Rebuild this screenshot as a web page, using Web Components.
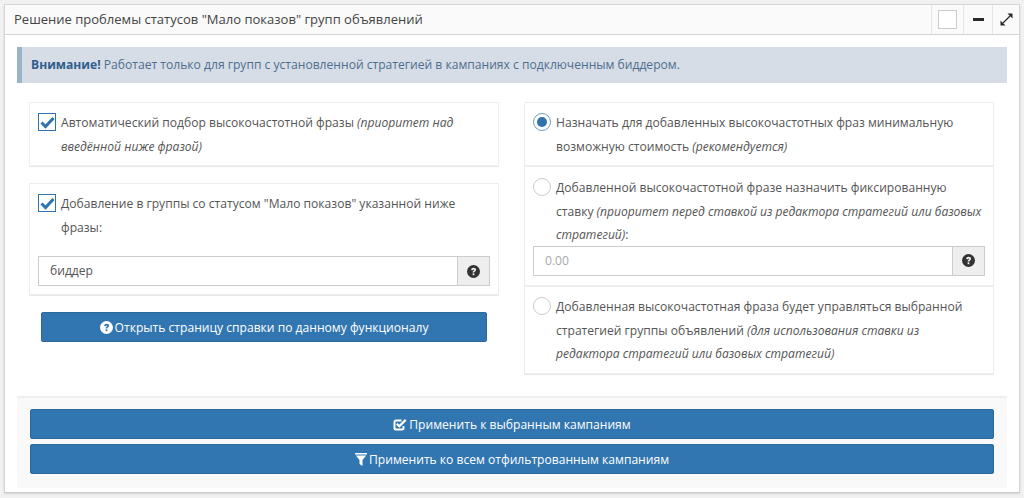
<!DOCTYPE html>
<html lang="ru"><head><meta charset="utf-8"><title>Мало показов</title>
<style>
html,body{margin:0;padding:0;background:#f1f1f1;height:498px;overflow:hidden}
body{font:12.1px/24px "Open Sans",sans-serif;color:#555;padding:4px 3px 0 4px;box-sizing:border-box}
</style></head><body>
<template id="i-q"><svg width="13" height="13" viewBox="0 0 24 24"><circle cx="12" cy="12" r="12" fill="currentColor"/><path d="M7.600 9.300c.2-2.600 2-4.100 4.600-4.100 2.700 0 4.500 1.500 4.500 3.700 0 1.600-.9 2.500-2 3.200-.9.600-1.100 1-1.100 1.900h-3.200c0-1.900.6-2.800 1.800-3.600.8-.5 1.100-.8 1.100-1.300 0-.5-.4-.9-1.100-.9-.8 0-1.200.5-1.300 1.300z" fill="var(--q,#fff)"/><rect x="10.400" y="15.400" width="3.200" height="3.400" fill="var(--q,#fff)"/></svg></template>
<ws-widget title-text='Решение проблемы статусов "Мало показов" групп объявлений'>
  <ws-alert><b>Внимание!</b> Работает только для групп с установленной стратегией в кампаниях с подключенным биддером.</ws-alert>
  <ws-columns>
    <div slot="left">
      <ws-card><ws-option type="check" checked>Автоматический подбор высокочастотной фразы <i>(приоритет над введённой ниже фразой)</i></ws-option></ws-card>
      <ws-card style="margin-top:17px;padding-bottom:8px"><ws-option type="check" checked>Добавление в группы со статусом "Мало показов" указанной ниже фразы:</ws-option><ws-input value="биддер" style="margin-top:17px"></ws-input></ws-card>
      <ws-button style="margin:17px 12px 0 12px" icon="q">Открыть страницу справки по данному функционалу</ws-button>
    </div>
    <div slot="right">
      <ws-card><ws-option type="radio" checked>Назначать для добавленных высокочастотных фраз минимальную возможную стоимость <i>(рекомендуется)</i></ws-option></ws-card>
      <ws-card style="padding-top:9px;padding-bottom:9px"><ws-option type="radio">Добавленной высокочастотной фразе назначить фиксированную ставку <i>(приоритет перед ставкой из редактора стратегий или базовых стратегий)</i>:</ws-option><ws-input placeholder="0.00" style="margin-top:-1px"></ws-input></ws-card>
      <ws-card><ws-option type="radio">Добавленная высокочастотная фраза будет управляться выбранной стратегией группы объявлений <i>(для использования ставки из редактора стратегий или базовых стратегий)</i></ws-option></ws-card>
    </div>
  </ws-columns>
  <ws-footer>
    <ws-button icon="check">Применить к выбранным кампаниям</ws-button>
    <ws-button icon="filter" style="margin-top:5px">Применить ко всем отфильтрованным кампаниям</ws-button>
  </ws-footer>
</ws-widget>
<script>
const def=(n,html,init)=>customElements.define(n,class extends HTMLElement{constructor(){super();this.attachShadow({mode:'open'}).innerHTML=typeof html==='function'?html(this):html}connectedCallback(){const r=this.shadowRoot;if(init&&!r.__i){r.__i=1;init(this,r)}}});
def('ws-widget',`<style>
:host{display:block;width:1016px;height:489px;box-sizing:border-box;background:#fff;border:1px solid #d6d6d6;border-bottom-color:#c8c8c8;box-shadow:0 1px 2px rgba(0,0,0,.12)}
header{display:flex;height:30px;box-sizing:border-box;background:#fafafa;border-bottom:1px solid #d4d4d4}
h2{flex:1;margin:0;padding-left:9px;font:400 13.03px/29px "Open Sans",sans-serif;color:#444}
.t{box-sizing:border-box;border-left:1px solid #e6e6e6;display:flex;align-items:center;justify-content:center;color:#222}
.t.a{width:32px}.t.m{width:29px}.t.e{width:27px}
.box{width:17px;height:17px;border:1px solid #ccc;background:#fff}
.body{padding:12px 12px 0 12px}
</style><header><h2 id="t"></h2><div class="t a"><div class="box"></div></div><div class="t m"><svg width="11" height="4"><rect width="11" height="3" fill="#2a2a2a"/></svg></div><div class="t e"><svg width="13" height="13" viewBox="0 0 13 13"><path d="M7.500 .5h5v5zM.5 7.500v5h5z" fill="#2a2a2a"/><path d="M3 10L10 3" stroke="#2a2a2a" stroke-width="1.300"/></svg></div></header><div class="body"><slot></slot></div>`,(el,r)=>{r.getElementById('t').textContent=el.getAttribute('title-text')});
def('ws-alert',`<style>:host{display:block;height:36px;box-sizing:border-box;background:#d6dde7;border-left:5px solid #9cb4c8;padding-left:9px;font-size:12.1px;line-height:36px;color:#4f6d8e}::slotted(b){color:#305d8c;font-weight:700}</style><slot></slot>`);
def('ws-columns',`<style>:host{display:flex;margin-top:19px;height:294px;padding-left:12px}.l{width:470px}.r{width:470px;margin-left:25px}</style><div class="l"><slot name="left"></slot></div><div class="r"><slot name="right"></slot></div>`);
def('ws-card',`<style>:host{display:block;background:#fff;border:1px solid #ededed;box-shadow:0 1px 1px rgba(0,0,0,.1);padding:8px 8px 7px 8px;border-radius:1px}</style><slot></slot>`);
def('ws-option',e=>{const c=e.getAttribute('type')==='check',on=e.hasAttribute('checked');
const mark=c?`<div class="b"><svg width="15" height="13" viewBox="0 0 15 13"><path d="M1.500 6.500l4 4 8-8.500" fill="none" stroke="#2e73ad" stroke-width="3"/></svg></div>`:`<div class="c${on?' on':''}">${on?'<span></span>':''}</div>`;
return `<style>:host{display:flex;line-height:23.6px;font-size:12.1px;color:#555;padding-right:2px}
.b{flex:none;width:16px;height:16px;border:1px solid #2e73ad;margin:2px 5px 0 0;display:flex;align-items:center;justify-content:center}
.c{flex:none;width:16px;height:16px;border:1px solid #ccc;border-radius:50%;margin:2px 5px 0 0;display:flex;align-items:center;justify-content:center;background:#fff}
.c.on{border-color:#6b9fc9}.c span{width:10px;height:10px;border-radius:50%;background:#2e73ad}
::slotted(i){font-style:italic;color:#555}
.t{flex:1}</style>${mark}<div class="t"><slot></slot></div>`});
def('ws-input',e=>{const v=e.getAttribute('value')||'',p=e.getAttribute('placeholder')||'';
return `<style>:host{display:flex;height:30px;box-sizing:border-box;border:1px solid #ccc;font-size:12.1px;line-height:28px;background:#fff}
.v{flex:1;padding-left:11px;color:${v?'#555':'#a8a8a8'}}
.a{width:31px;background:#eee;border-left:1px solid #ccc;display:flex;align-items:center;justify-content:center;color:#333;--q:#eee}</style><div class="v">${v||p}</div><div class="a">${document.getElementById('i-q').innerHTML}</div>`});
def('ws-button',e=>{const ic=e.getAttribute('icon');const I={
q:document.getElementById('i-q').innerHTML,
check:`<svg width="14" height="13" viewBox="0 0 14 13"><path d="M10.500 8v2a1.500 1.500 0 0 1-1.500 1.500H3A1.500 1.500 0 0 1 1.500 10V4A1.500 1.500 0 0 1 3 2.500h5.500" fill="none" stroke="#fff" stroke-width="2"/><path d="M3.800 5.800L6.300 8.300 12.700 1.900" fill="none" stroke="#fff" stroke-width="2.200"/></svg>`,
filter:`<svg width="12" height="13" viewBox="0 0 12 13"><path d="M0 0h12v1.500H0zM.8 2.500h10.400L7.500 7v6L4.500 11V7z" fill="#fff"/></svg>`}[ic];
return `<style>:host{display:flex;height:30px;box-sizing:border-box;align-items:center;justify-content:center;gap:2px;background:#3276b1;border:1px solid #2c699d;border-radius:2px;color:#fff;font-size:12.1px;font-weight:400;--q:#3276b1;line-height:28px;padding-top:1px}svg{display:block}</style>${I}<span><slot></slot></span>`});
def('ws-footer',`<style>:host{display:block;height:92px;box-sizing:border-box;margin:0;background:#f9f9f9;border-top:2px solid #efefef;padding:11px 13px 0 13px}</style><slot></slot>`);
</script>
</body></html>
